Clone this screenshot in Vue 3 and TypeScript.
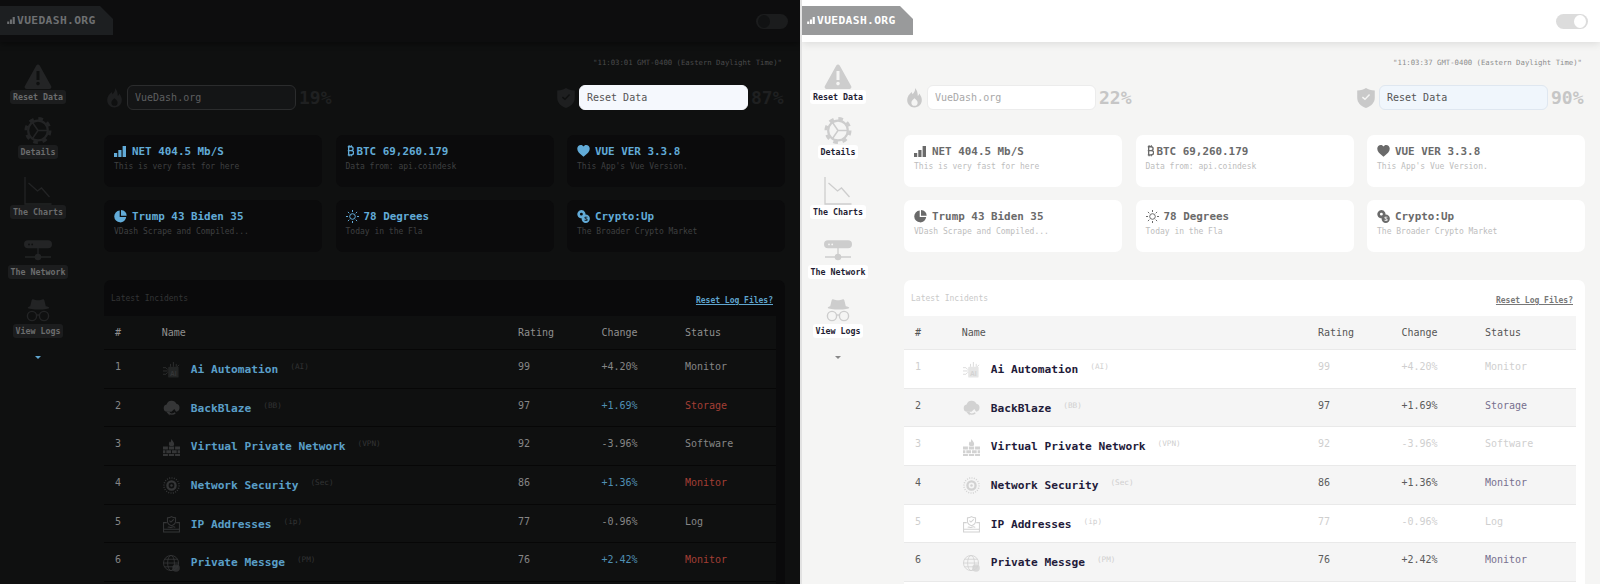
<script setup lang="ts">
interface Row {
  id: number
  icon: string
  name: string
  abbr: string
  rating: number
  change: string
  status: string
}

const themes = [
  { key: 'dark', time: '"11:03:01 GMT-0400 (Eastern Daylight Time)"', fire: 19, shield: 87 },
  { key: 'light', time: '"11:03:37 GMT-0400 (Eastern Daylight Time)"', fire: 22, shield: 90 },
]

const icons: Record<string, string> = {
  warn: '<path fill="currentColor" fill-rule="evenodd" d="M12.3 5.4a2 2 0 0 1 3.4 0l11.4 20.7a2 2 0 0 1-1.7 3H2.6a2 2 0 0 1-1.7-3zM12.5 11v9h3v-9zM14 21.8a1.8 1.8 0 1 0 0 3.6 1.8 1.8 0 0 0 0-3.6z"/>',
  gear: '<g fill="none" stroke="currentColor"><circle cx="14" cy="15.5" r="9.8" stroke-width="2.2"/><circle cx="14" cy="15.5" r="12" stroke-width="3" stroke-dasharray="4.7 4.72"/><path stroke-width="1.5" d="M14 15.5H24M14 15.5 8.5 7.5M14 15.5 8.5 23.5"/></g>',
  chart: '<path fill="none" stroke="currentColor" stroke-width="1.3" d="M1 2v27h26.5M4.5 8l9 8 4-3 8 9"/>',
  network: '<path fill="currentColor" fill-rule="evenodd" d="M4 5.3h20a4 4 0 0 1 0 8H4a4 4 0 0 1 0-8zM5 8.500a.9.9 0 1 0 0 1.8.9.9 0 0 0 0-1.8zM8.2 8.5a.9.9 0 1 0 0 1.8.9.9 0 0 0 0-1.8z"/><circle cx="14" cy="22" r="3.3" fill="currentColor"/><path stroke="currentColor" stroke-width="1.3" d="M14 13v6M1 22h26"/>',
  logs: '<path fill="currentColor" d="M6.2 12.3 7.6 6.6c.3-1 1-1.5 2-1.2l2 .6c1.5.4 3 .4 4.8 0l2-.6c1-.3 1.7.2 2 1.2l1.4 5.7c2 .3 3.400.9 3.400 1.500 0 1.100-5 1.800-10.200 1.800S3.800 14.900 3.800 13.800c0-.6.9-1.200 2.400-1.500z"/><g fill="none" stroke="currentColor" stroke-width="1.4"><circle cx="8" cy="22" r="4.6"/><circle cx="20" cy="22" r="4.6"/><path d="M12.5 21h3"/></g>',
  bars: '<path fill="currentColor" d="M0 7h3.2v4H0zM4.3 4h3.2v7H4.3zM8.6 0H12v11H8.600z"/>',
  btc: '<path fill="none" stroke="currentColor" stroke-width="1.5" d="M2 1.700h3.500c3.300 0 3.300 4.300 0 4.300H2m3.500 0c4.200 0 4.200 4.800 0 4.800H2M3 1v10.500M3.500 0v2M6 0v2M3.500 10.500v2M6 10.500v2"/>',
  heart: '<path fill="currentColor" d="M6.500 12.200C2.500 9.300 0 7 0 4 0 1.700 1.700 0 3.700 0 4.900 0 6 .6 6.500 1.600 7 .6 8.100 0 9.300 0 11.300 0 13 1.700 13 4c0 3-2.500 5.300-6.500 8.200z"/>',
  pie: '<path fill="currentColor" d="M5.700.4A6 6 0 1 0 12.200 7H5.700zM7 0v5.700h5.700A6.200 6.200 0 0 0 7 0z"/>',
  sun: '<circle cx="6.500" cy="6.500" r="2.800" fill="none" stroke="currentColor"/><path stroke="currentColor" d="M6.500 0v2M6.500 11v2M0 6.500h2M11 6.500h2M1.900 1.900l1.400 1.400M9.700 9.700l1.400 1.400M1.900 11.100l1.400-1.400M9.700 3.300l1.400-1.400"/>',
  coins: '<path fill="currentColor" fill-rule="evenodd" d="M4.300 0a4.300 4.300 0 0 1 3.600 6.600 4.600 4.600 0 0 0-1.500 1.500A4.300 4.300 0 1 1 4.300 0zM4.300 2.800a1.500 1.500 0 1 0 0 3 1.500 1.500 0 0 0 0-3z"/><path fill="currentColor" fill-rule="evenodd" d="M8.800 4.800a4.300 4.300 0 1 1 0 8.600 4.300 4.300 0 0 1 0-8.600zM7.600 7v1.600l2 1v.6H7.600v1h3V9.300l-2-1v-.4h2V7z"/>',
  flame: '<path fill="currentColor" fill-rule="evenodd" d="M9 0c.6 3.200-1 4.600-2.500 6.300C6 5.500 5.800 4.800 5.800 4 3 6 1 9 1 12.300 1 16.700 4.300 20 8.500 20s7.500-3.300 7.500-7.600c0-2.800-1.300-4.900-2.600-6.700-.2 1.100-.7 1.900-1.500 2.500C11.800 5 11.200 2 9 0zM8.500 10.500c-2.100 1.700-3.200 3-3.200 4.600a3.200 3.200 0 0 0 6.400 0c0-1.600-1.100-2.900-3.200-4.600z"/>',
  shield: '<path fill="currentColor" fill-rule="evenodd" d="M9 0c2.500 1.500 5 2.200 9 2.500V10c0 5-3.500 8.500-9 10.500C3.500 18.500 0 15 0 10V2.500C4 2.200 6.500 1.500 9 0zM5.800 8.800 4.800 10l3.200 2.600 5.200-5.300-1.100-1.100L8 10.400z"/>',
  ai: '<rect x="5.500" y="5" width="11" height="11.500" rx="1" fill="currentColor" opacity=".55"/><text x="11" y="14.300" text-anchor="middle" font-size="7" font-weight="700" font-family="Liberation Sans, sans-serif" fill="currentColor">AI</text><path fill="none" stroke="currentColor" stroke-width=".8" d="M0 6h3l2 2M0 9.500h5M0 13h3l2-2M8 5V2M11 5V0M14 5V2M17 3l-2 2"/>',
  cloud: '<path fill="currentColor" d="M4.400 12.500a3.900 3.900 0 0 1-.6-7.700 5.600 5.600 0 0 1 10.400-.8 4.300 4.300 0 0 1 3.300 4.200 4.300 4.300 0 0 1-3.600 4.200L12 9.500 9 12.500z"/><path fill="none" stroke="currentColor" stroke-width="1.500" d="M6 13.500c1.500 1.800 5 2 7 0"/><path fill="currentColor" d="M7 16.500v-4H3.500z"/>',
  wall: '<path fill="currentColor" d="M0 8h5.200v3H0zM6.200 8h5.600v3H6.200zM12.800 8H18v3h-5.200zM0 12h2.500v3H0zM3.500 12h5v3h-5zM9.500 12h5v3h-5zM15.500 12H18v3h-2.500zM0 16h5.200v2H0zM6.200 16h5.600v2H6.200zM12.800 16H18v2h-5.200zM9 0c.4 1.600 2.800 3 2.800 5.200 0 1.300-.6 2-1.300 2.300H7.500C6.700 7 6.200 6.200 6.200 5.200c0-1 .5-1.800 1-2.500.2.500.5.800.8 1C8.200 2.500 8.700 1.200 9 0z"/>',
  target: '<circle cx="9" cy="9" r="8" fill="none" stroke="currentColor" stroke-width="1.600" stroke-dasharray="1 1.500"/><circle cx="9" cy="9" r="4.300" fill="none" stroke="currentColor" stroke-width="2.500"/><circle cx="9" cy="9" r="1.300" fill="currentColor"/>',
  inbox: '<path fill="none" stroke="currentColor" stroke-width="1.100" d="M4 7H.6v10h16.800V7H14M.6 14h16.800M5 12c1.500-1.300 2.500 1 4 0s2.500-1 4 0M9 .6c1.500 1 3 1.300 4.300 1.400v3.500c0 2.300-1.800 3.800-4.300 4.800-2.500-1-4.300-2.500-4.300-4.800V2C6 1.900 7.500 1.600 9 .6zM6.800 5l1.600 1.500 3-3"/>',
  globe: '<g fill="none" stroke="currentColor" stroke-width=".9"><circle cx="8.500" cy="8.500" r="8"/><ellipse cx="8.500" cy="8.500" rx="3.600" ry="8"/><path d="M.5 8.500h16M1.700 4.500h13.600M1.700 12.500h13.600"/></g><circle cx="13.800" cy="13.800" r="4" fill="currentColor" opacity=".8"/>',
}

const sideItems = [
  { label: 'Reset Data', icon: 'warn' },
  { label: 'Details', icon: 'gear' },
  { label: 'The Charts', icon: 'chart' },
  { label: 'The Network', icon: 'network' },
  { label: 'View Logs', icon: 'logs' },
]

const cards = [
  { title: 'NET 404.5 Mb/S', sub: 'This is very fast for here', icon: 'bars', box: '0 0 12 11', w: 12, h: 11, narrow: false },
  { title: 'BTC 69,260.179', sub: 'Data from: api.coindesk', icon: 'btc', box: '0 0 9 13', w: 8, h: 12, narrow: true },
  { title: 'VUE VER 3.3.8', sub: "This App's Vue Version.", icon: 'heart', box: '0 0 13 12.5', w: 13, h: 12, narrow: false },
  { title: 'Trump 43 Biden 35', sub: 'VDash Scrape and Compiled...', icon: 'pie', box: '0 0 13 13', w: 13, h: 13, narrow: false },
  { title: '78 Degrees', sub: 'Today in the Fla', icon: 'sun', box: '0 0 13 13', w: 13, h: 13, narrow: false },
  { title: 'Crypto:Up', sub: 'The Broader Crypto Market', icon: 'coins', box: '0 0 13 13.5', w: 13, h: 13, narrow: false },
]

const rows: Row[] = [
  { id: 1, icon: 'ai', name: 'Ai Automation', abbr: '(AI)', rating: 99, change: '+4.20%', status: 'Monitor' },
  { id: 2, icon: 'cloud', name: 'BackBlaze', abbr: '(BB)', rating: 97, change: '+1.69%', status: 'Storage' },
  { id: 3, icon: 'wall', name: 'Virtual Private Network', abbr: '(VPN)', rating: 92, change: '-3.96%', status: 'Software' },
  { id: 4, icon: 'target', name: 'Network Security', abbr: '(Sec)', rating: 86, change: '+1.36%', status: 'Monitor' },
  { id: 5, icon: 'inbox', name: 'IP Addresses', abbr: '(ip)', rating: 77, change: '-0.96%', status: 'Log' },
  { id: 6, icon: 'globe', name: 'Private Messge', abbr: '(PM)', rating: 76, change: '+2.42%', status: 'Monitor' },
]
</script>

<template>
  <div class="screens">
    <section v-for="theme in themes" :key="theme.key" class="panel" :class="`panel--${theme.key}`">
      <header class="topbar">
        <div class="brand">
          <svg class="brand__bars" viewBox="0 0 12 11" width="8" height="7" v-html="icons.bars" />
          <span>VUEDASH.ORG</span>
        </div>
        <div class="switch"><span class="switch__knob" /></div>
      </header>

      <div class="body">
        <nav class="side">
          <a v-for="item in sideItems" :key="item.label" class="side__item">
            <svg class="side__icon" viewBox="0 0 28 30" width="28" height="30" v-html="icons[item.icon]" />
            <span class="side__label">{{ item.label }}</span>
          </a>
          <span class="side__caret" />
        </nav>

        <main class="main">
          <p class="clock">{{ theme.time }}</p>

          <div class="meters">
            <div class="meter">
              <svg class="meter__icon" viewBox="0 0 17 20.5" width="17" height="20" v-html="icons.flame" />
              <input class="meter__input" type="text" placeholder="VueDash.org" />
              <strong class="meter__value">{{ theme.fire }}%</strong>
            </div>
            <div class="meter">
              <svg class="meter__icon" viewBox="0 0 18 20.5" width="18" height="20" v-html="icons.shield" />
              <input class="meter__input meter__input--active" type="text" value="Reset Data" />
              <strong class="meter__value">{{ theme.shield }}%</strong>
            </div>
          </div>

          <div class="cards">
            <article v-for="card in cards" :key="card.title" class="card">
              <h3 class="card__title">
                <span class="card__glyph" :class="{ 'card__glyph--narrow': card.narrow }">
                  <svg :viewBox="card.box" :width="card.w" :height="card.h" v-html="icons[card.icon]" />
                </span>
                <span>{{ card.title }}</span>
              </h3>
              <p class="card__sub">{{ card.sub }}</p>
            </article>
          </div>

          <div class="incidents">
            <div class="incidents__head">
              <span class="incidents__title">Latest Incidents</span>
              <a class="incidents__reset">Reset Log Files?</a>
            </div>
            <div class="grid">
              <div class="grid__row grid__row--head">
                <span>#</span>
                <span>Name</span>
                <span>Rating</span>
                <span>Change</span>
                <span>Status</span>
              </div>
              <div v-for="row in rows" :key="row.id" class="grid__row" :class="{ 'grid__row--hot': row.id % 2 === 0 }">
                <span>{{ row.id }}</span>
                <span class="grid__name">
                  <svg class="grid__icon" viewBox="0 0 18 18" width="17" height="17" v-html="icons[row.icon]" />
                  <b>{{ row.name }}</b>
                  <i>{{ row.abbr }}</i>
                </span>
                <span>{{ row.rating }}</span>
                <span class="grid__change">{{ row.change }}</span>
                <span class="grid__status">{{ row.status }}</span>
              </div>
              <div class="grid__row" />
            </div>
          </div>
        </main>
      </div>
    </section>
  </div>
</template>

<style>
html, body {
  margin: 0;
  background: #0f1010;
  overflow: hidden;
}
</style>

<style scoped>
.screens {
  width: 1600px;
  height: 584px;
  display: grid;
  grid-template-columns: 800px 800px;
  overflow: hidden;
  font-family: "DejaVu Sans Mono", "Liberation Mono", monospace;
}

.panel {
  height: 584px;
  overflow: hidden;
  background: var(--page);
  color: var(--cell);
}

.panel--dark {
  --page: #0f1010;
  --bar: #0d0d0e;
  --bar-shadow: 0 2px 6px rgba(0, 0, 0, .45);
  --brand-bg: #1d1f21;
  --brand-ink: #6e7072;
  --track: #1b1c1d;
  --knob: #111213;
  --side-icon: #232425;
  --label-bg: #1c1d1e;
  --label-ink: #6b6c6d;
  --caret: #5fa5cf;
  --clock: #4a4b4c;
  --meter-icon: #1e1f20;
  --input-bg: #141516;
  --input-line: #2b2c2d;
  --input-ink: #5e5f60;
  --active-bg: #f5f8fd;
  --active-line: #f5f8fd;
  --active-ink: #555;
  --value: #1f2021;
  --card: #0b0b0c;
  --title: #62abd8;
  --sub: #3f4041;
  --head-bg: #0a0a0b;
  --faint: #343536;
  --reset: #5fa5cf;
  --row: #0f1010;
  --row-hot: #0f1010;
  --line: #070707;
  --th: #8f8f8f;
  --cell: #868686;
  --cell-hot: #868686;
  --change-hot: #4f8fb3;
  --status-hot: #a43f35;
  --name: #5a9fc8;
  --row-icon: #353637;
  --abbr: #333435;
}

.panel--light {
  --page: #f5f5f4;
  --bar: #fff;
  --bar-shadow: 0 2px 8px rgba(0, 0, 0, .1);
  --brand-bg: #999a9b;
  --brand-ink: #fff;
  --track: #dcdcdc;
  --knob: #fff;
  --side-icon: #cdcdcd;
  --label-bg: #fff;
  --label-ink: #1f1d33;
  --caret: #888;
  --clock: #8d8d8d;
  --meter-icon: #c9c9c9;
  --input-bg: #fff;
  --input-line: #ececec;
  --input-ink: #a8a8a8;
  --active-bg: #f0f6fc;
  --active-line: #dfe7f0;
  --active-ink: #555;
  --value: #c6c6c6;
  --card: #fff;
  --title: #6a6a6a;
  --sub: #bdbdbd;
  --head-bg: #fff;
  --faint: #c9c9c9;
  --reset: #777;
  --row: #fff;
  --row-hot: #f5f5f5;
  --line: #e9e9e9;
  --th: #555;
  --cell: #cfcfcf;
  --cell-hot: #5c5c5c;
  --change-hot: #5c5c5c;
  --status-hot: #77708f;
  --name: #1f1b3a;
  --row-icon: #d2d2d2;
  --abbr: #cfcfcf;
  border-left: 2px solid #e2e2e2;
  box-sizing: border-box;
}

.topbar {
  position: relative;
  z-index: 1;
  height: 42px;
  box-sizing: border-box;
  padding: 6px 12px 0 0;
  display: flex;
  justify-content: space-between;
  background: var(--bar);
  box-shadow: var(--bar-shadow);
}

.brand {
  width: 113px;
  height: 29px;
  box-sizing: border-box;
  padding-left: 7px;
  display: flex;
  align-items: center;
  gap: 2px;
  font-size: 11.3px;
  font-weight: 700;
  letter-spacing: .35px;
  background: var(--brand-bg);
  color: var(--brand-ink);
  clip-path: polygon(0 0, 100px 0, 113px 13px, 113px 29px, 0 29px);
}

.panel--light .brand {
  margin-left: -2px;
}

.switch {
  width: 32px;
  height: 15px;
  margin-top: 8px;
  padding: 1px 2px;
  box-sizing: border-box;
  border-radius: 8px;
  display: flex;
  background: var(--track);
}

.panel--light .switch {
  justify-content: flex-end;
}

.switch__knob {
  width: 12px;
  height: 13px;
  border-radius: 50%;
  background: var(--knob);
}

.body {
  display: flex;
}

.panel--light .body {
  margin-left: -2px;
}

.side {
  width: 104px;
  padding: 7px 28px 0 0;
  box-sizing: border-box;
  display: flex;
  flex-direction: column;
  align-items: center;
}

.side__item {
  height: 60px;
  display: flex;
  flex-direction: column;
  align-items: center;
  justify-content: flex-end;
}

.side__item:nth-child(1),
.side__item:nth-child(2) {
  height: 55px;
}

.side__item:nth-child(5) {
  height: 59px;
}

.side__icon {
  display: block;
  color: var(--side-icon);
}

.side__label {
  height: 14px;
  padding: 0 3px;
  border-radius: 3px;
  font-size: 8.3px;
  font-weight: 700;
  line-height: 14px;
  white-space: nowrap;
  background: var(--label-bg);
  color: var(--label-ink);
}

.side__caret {
  margin-top: 18px;
  border-left: 3px solid transparent;
  border-right: 3px solid transparent;
  border-top: 3px solid var(--caret);
}

.main {
  width: 681px;
}

.clock {
  margin: 16px 3px 0 0;
  height: 10px;
  font-size: 7.3px;
  line-height: 10px;
  text-align: right;
  color: var(--clock);
}

.meters {
  margin-top: 17px;
  display: flex;
  justify-content: space-between;
}

.meter {
  height: 25px;
  display: flex;
  align-items: center;
  gap: 4px;
}

.meter:first-child {
  padding-left: 2px;
}

.meter__icon {
  color: var(--meter-icon);
}

.meter__input {
  width: 169px;
  height: 25px;
  box-sizing: border-box;
  padding: 0 7px;
  border: 1px solid var(--input-line);
  border-radius: 6px;
  outline: none;
  font: 10px "DejaVu Sans Mono", monospace;
  background: var(--input-bg);
  color: var(--input-ink);
}

.meter__input::placeholder {
  color: var(--input-ink);
  opacity: 1;
}

.meter__input--active {
  background: var(--active-bg);
  border-color: var(--active-line);
  color: var(--active-ink);
}

.meter__value {
  width: 34px;
  margin-left: -1px;
  font-size: 18px;
  font-weight: 700;
  color: var(--value);
}

.cards {
  margin-top: 25px;
  display: grid;
  grid-template-columns: repeat(3, 218px);
  justify-content: space-between;
  gap: 13px 0;
}

.card {
  height: 52px;
  box-sizing: border-box;
  padding: 9px 10px 0;
  border-radius: 7px;
  background: var(--card);
}

.card__title {
  margin: 0;
  display: flex;
  align-items: center;
  height: 14px;
  font-size: 10.9px;
  font-weight: 700;
  color: var(--title);
}

.card__glyph {
  width: 18px;
  display: flex;
  align-items: center;
}

.card__glyph--narrow {
  width: 11px;
}

.card__sub {
  margin: 3px 0 0;
  font-size: 8px;
  line-height: 12px;
  color: var(--sub);
}

.incidents {
  margin-top: 28px;
  background: var(--head-bg);
  border-radius: 7px 7px 0 0;
  padding-right: 9px;
}

.incidents__head {
  height: 36px;
  box-sizing: border-box;
  padding: 14px 3px 0 7px;
  display: flex;
  justify-content: space-between;
  font-size: 8px;
  line-height: 10px;
}

.incidents__title {
  color: var(--faint);
}

.incidents__reset {
  margin-top: 2px;
  font-weight: 700;
  text-decoration: underline;
  color: var(--reset);
}

.grid__row {
  height: 38.67px;
  box-sizing: border-box;
  display: grid;
  grid-template-columns: 57.7px 356.3px 83.5px 83.5px 1fr;
  padding-top: 10px;
  border-bottom: 1px solid var(--line);
  font-size: 10px;
  line-height: 14px;
  background: var(--row);
  color: var(--cell);
}

.grid__row > span:first-child {
  padding-left: 11px;
}

.grid__row--head {
  height: 34px;
  padding-top: 10px;
  background: var(--row-hot);
  color: var(--th);
}

.grid__row--hot {
  background: var(--row-hot);
  color: var(--cell-hot);
}

.grid__row--hot .grid__change {
  color: var(--change-hot);
}

.grid__row--hot .grid__status {
  color: var(--status-hot);
}

.grid__name {
  height: 24px;
  margin-top: -2px;
  display: flex;
  align-items: center;
  gap: 11px;
}

.grid__name b {
  font-size: 11.2px;
  color: var(--name);
}

.grid__name i {
  margin: -6px 0 0 1px;
  font-style: normal;
  font-size: 7.7px;
  color: var(--abbr);
}

.grid__icon {
  margin-left: 1px;
  color: var(--row-icon);
}
</style>
